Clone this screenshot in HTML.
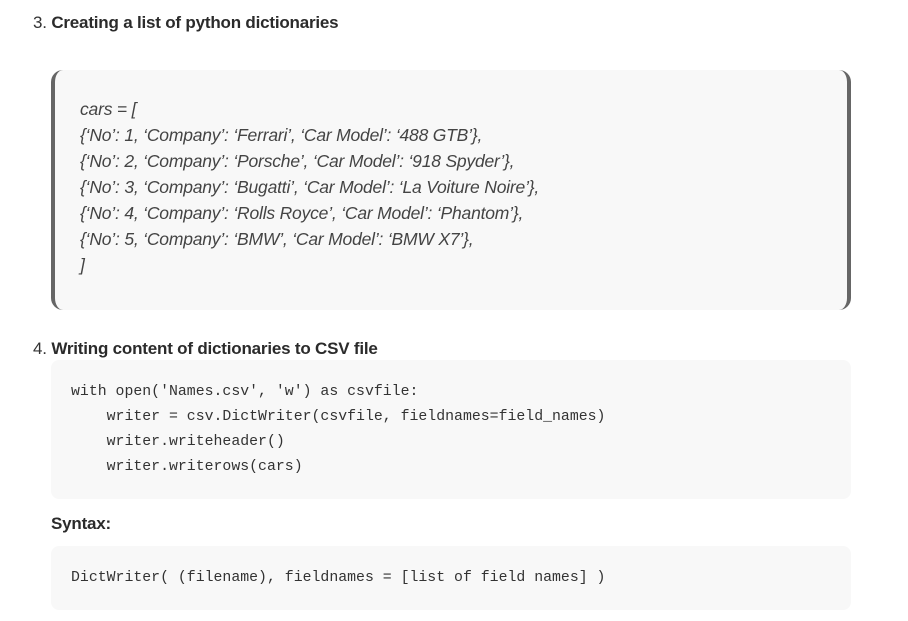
<!DOCTYPE html>
<html><head><style>
body{margin:0;background:#fff;width:908px;height:621px;overflow:hidden;font-family:"Liberation Sans",sans-serif;color:#333;}
.h{position:absolute;left:33px;font-size:17px;letter-spacing:-0.2px;color:#333;}
.h b{color:#2b2b2b}
.bq{position:absolute;left:51px;top:70px;width:792px;height:240px;background:#f8f8f8;border-left:4px solid #666;border-right:4px solid #666;border-radius:12px;}
.bq div{position:absolute;left:25px;top:26px;font-style:italic;font-size:17.5px;line-height:26px;color:#444;letter-spacing:-0.2px;white-space:pre;}
.code{position:absolute;left:51px;width:800px;background:#f8f8f8;border-radius:8px;}
.code pre{margin:0;position:absolute;left:20px;font-family:"Liberation Mono",monospace;font-size:14.85px;line-height:25px;color:#333;}
</style></head><body>
<div class="h" style="top:13px">3. <b>Creating a list of python dictionaries</b></div>
<div class="bq"><div>cars = [
{‘No’: 1, ‘Company’: ‘Ferrari’, ‘Car Model’: ‘488 GTB’},
{‘No’: 2, ‘Company’: ‘Porsche’, ‘Car Model’: ‘918 Spyder’},
{‘No’: 3, ‘Company’: ‘Bugatti’, ‘Car Model’: ‘La Voiture Noire’},
{‘No’: 4, ‘Company’: ‘Rolls Royce’, ‘Car Model’: ‘Phantom’},
{‘No’: 5, ‘Company’: ‘BMW’, ‘Car Model’: ‘BMW X7’},
]</div></div>
<div class="h" style="top:339px">4. <b>Writing content of dictionaries to CSV file</b></div>
<div class="code" style="top:360px;height:139px"><pre style="top:20px">with open('Names.csv', 'w') as csvfile:
    writer = csv.DictWriter(csvfile, fieldnames=field_names)
    writer.writeheader()
    writer.writerows(cars)</pre></div>
<div class="h" style="top:514px;left:51px"><b>Syntax:</b></div>
<div class="code" style="top:546px;height:64px"><pre style="top:20px">DictWriter( (filename), fieldnames = [list of field names] )</pre></div>
</body></html>
